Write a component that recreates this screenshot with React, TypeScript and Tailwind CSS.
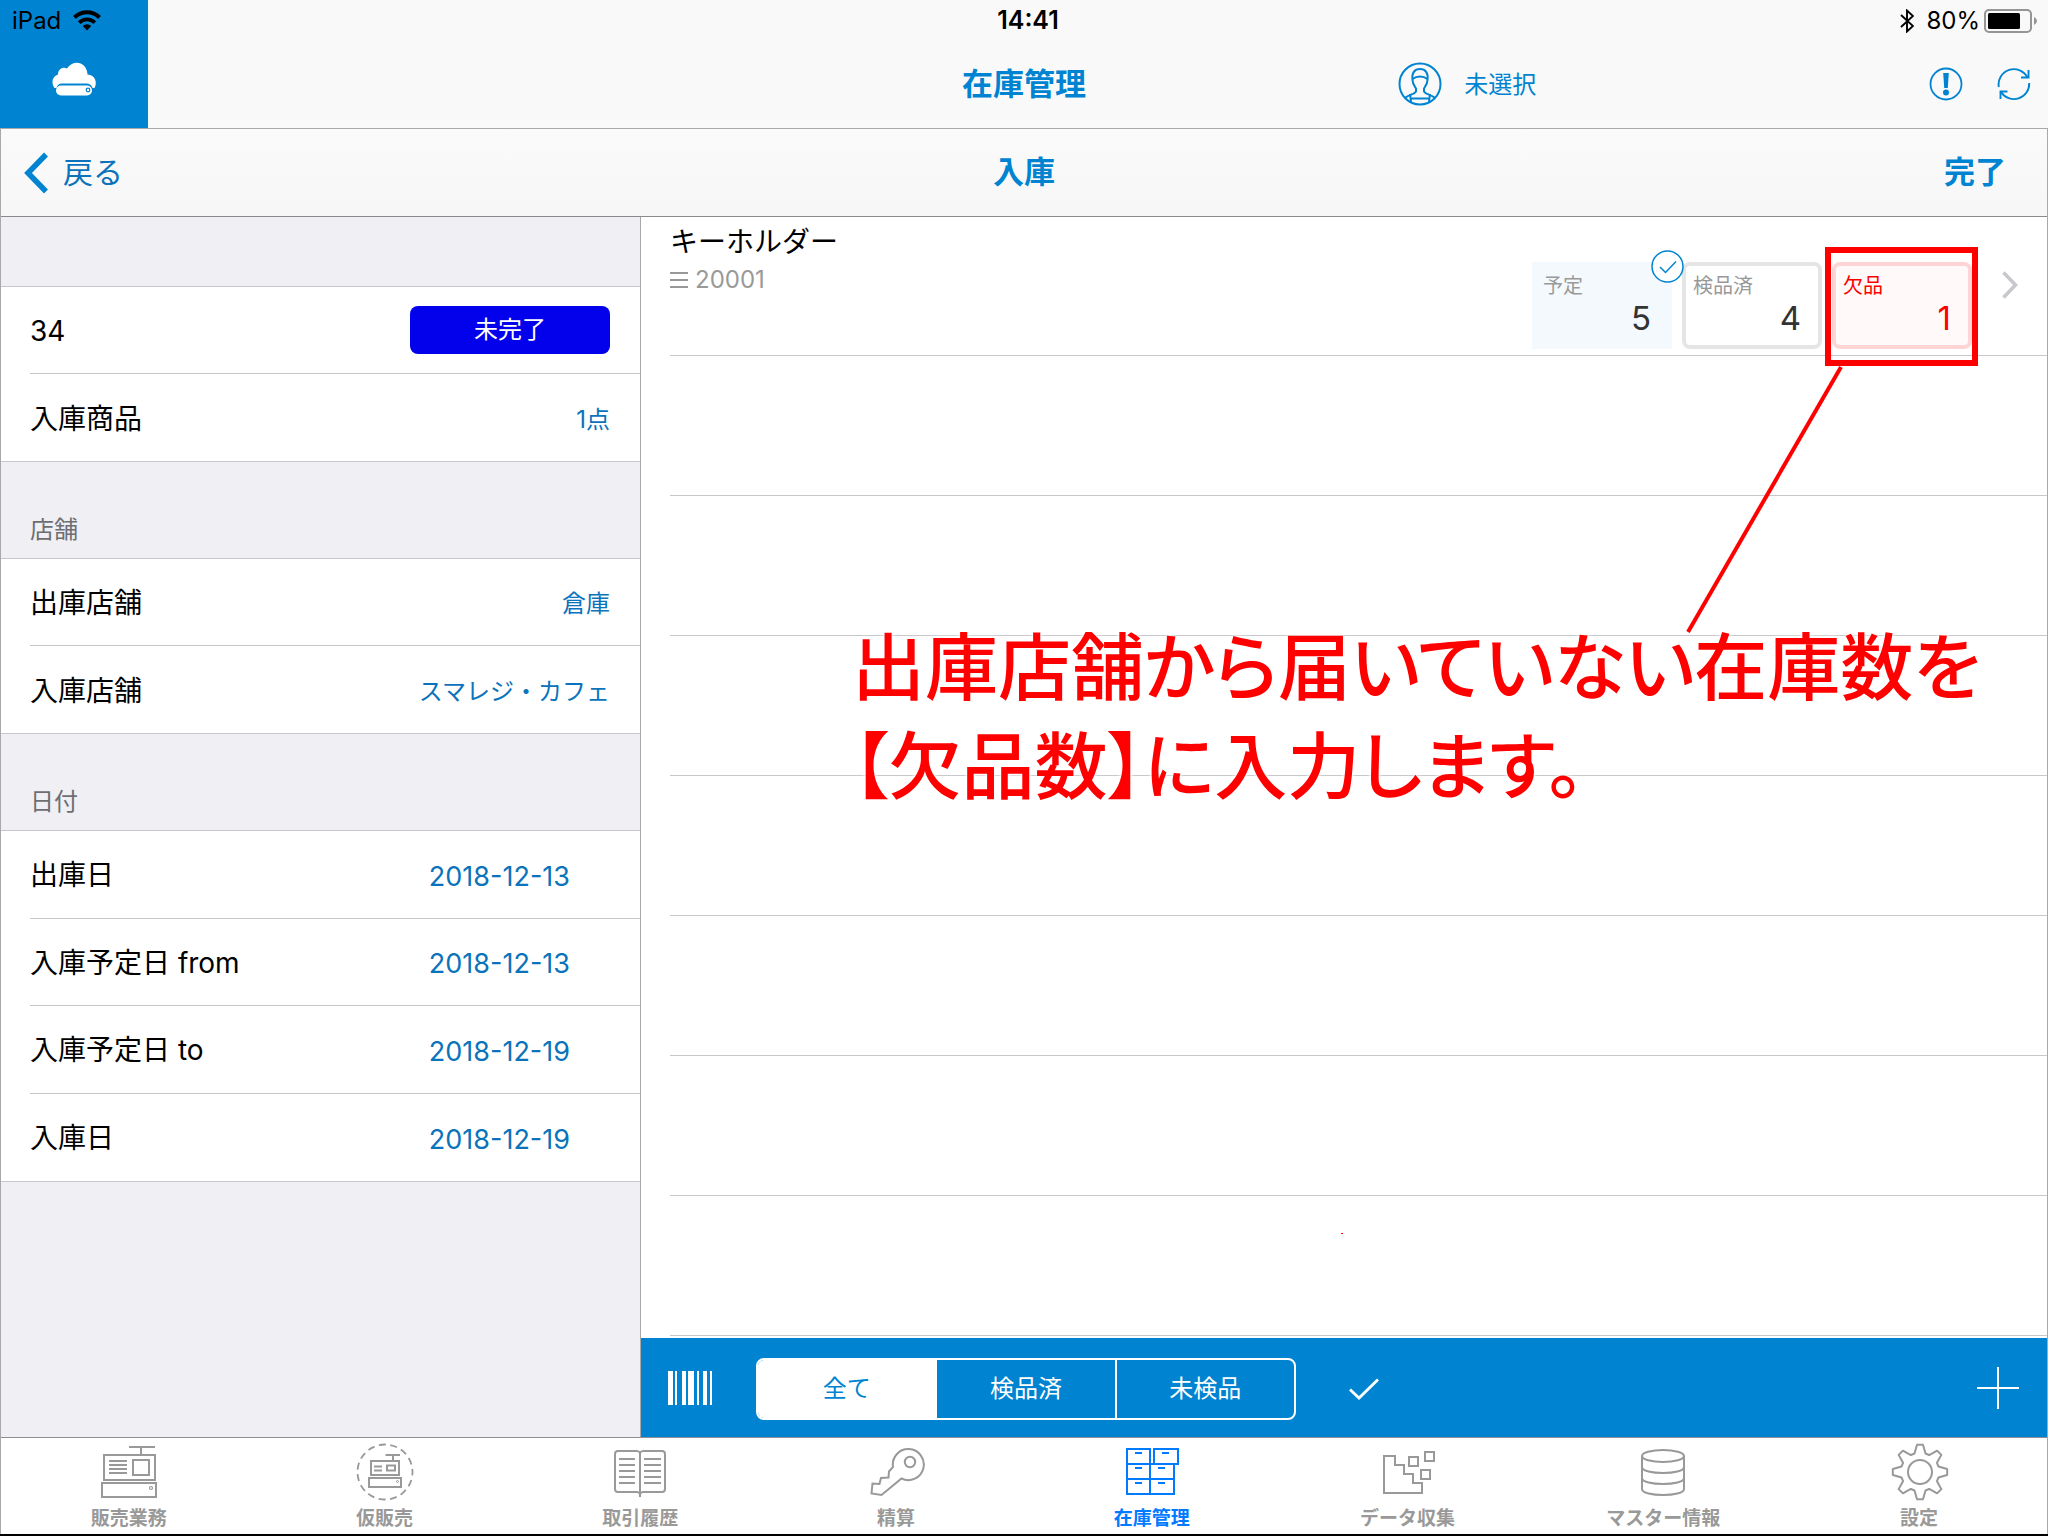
import type { ReactNode } from "react";

const BLUE = "#0084d1";

function WifiIcon() {
  return (
    <svg width="28" height="21" viewBox="0 0 28 21" aria-hidden="true">
      <path d="M1.500 7.500 A17.500 17.500 0 0 1 26.500 7.500" fill="none" stroke="#000" strokeWidth="4" />
      <path d="M6.200 12.600 A11 11 0 0 1 21.800 12.600" fill="none" stroke="#000" strokeWidth="3.800" />
      <path d="M9.800 16 A6 6 0 0 1 18.200 16 L14 20.500 Z" fill="#000" />
    </svg>
  );
}

function CloudLogo() {
  return (
    <svg width="44" height="34" viewBox="0 0 44 34" aria-hidden="true">
      <path
        d="M2.500 26 C-1 21 0 14.500 6 12.500 C6 7 11 4.500 15 6.500 C21 -3 35 -0.500 35.500 12.500 C42 13 46 19 42.500 26 L40.500 26 C39.500 23 37.500 21.500 34.500 21.500 L10 21.500 C7 21.500 5 23.500 4.500 26 Z"
        fill="#fff"
      />
      <rect x="4" y="23.500" width="36" height="10" rx="5" fill="#fff" />
      <circle cx="36" cy="28" r="1.800" fill="none" stroke={BLUE} strokeWidth="1.200" />
    </svg>
  );
}

function BluetoothIcon() {
  return (
    <svg width="14" height="24" viewBox="0 0 14 24" fill="none" stroke="#000" strokeWidth="1.900" aria-hidden="true">
      <path d="M1 6 L13 17 L7 22.500 V1.500 L13 7 L1 18" />
    </svg>
  );
}

function BatteryIcon() {
  return (
    <svg width="54" height="24" viewBox="0 0 54 24" aria-hidden="true">
      <rect x="1" y="1" width="46" height="22" rx="4" fill="none" stroke="#959595" strokeWidth="2" />
      <rect x="4" y="4" width="32" height="16" rx="1.500" fill="#000" />
      <path d="M50 8 Q53 9.500 53 12 Q53 14.500 50 16 Z" fill="#959595" />
    </svg>
  );
}

function PersonIcon() {
  return (
    <svg width="44" height="44" viewBox="0 0 44 44" fill="none" stroke={BLUE} strokeWidth="2" aria-hidden="true">
      <circle cx="22" cy="22" r="20.500" />
      <path d="M14.500 18 C13.500 11 16.500 7 22 7 C27.500 7 30.500 11 29.500 18 C29.500 22 27 25 26 26.500 L26 29.500 C28 33 33 32 37 36 M14.500 18 C14.500 22 17 25 18 26.500 L18 29.500 C16 33 11 32 7 36" />
      <path d="M14.500 17 C19 13.500 25 13.500 29.500 17" />
      <path d="M12 32 L13 40 M32 32 L31 40 M12.500 36.500 H31.500" />
    </svg>
  );
}

function AlertIcon() {
  return (
    <svg width="34" height="34" viewBox="0 0 34 34" aria-hidden="true">
      <circle cx="17" cy="17" r="15.500" fill="none" stroke={BLUE} strokeWidth="1.800" />
      <path d="M14.200 6 H19.800 L18.800 21 H15.200 Z" fill={BLUE} />
      <circle cx="17" cy="25.500" r="3" fill={BLUE} />
    </svg>
  );
}

function RefreshIcon() {
  return (
    <svg width="34" height="34" viewBox="0 0 34 34" fill="none" stroke={BLUE} strokeWidth="1.900" aria-hidden="true">
      <path d="M1.800 20 A15.300 15.300 0 0 1 30.500 10.500" />
      <path d="M24 10.500 H31.500 V3" />
      <path d="M32.200 16 A15.300 15.300 0 0 1 4 25" />
      <path d="M10.500 24.500 H3.500 V32" />
    </svg>
  );
}

function RegisterIcon() {
  return (
    <>
      <path d="M30 6 H56 M42 6 V14" />
      <rect x="5" y="14" width="51" height="25" />
      <path d="M10 20 H28 M10 24 H28 M10 28 H28 M10 32 H28" />
      <rect x="34" y="19" width="16" height="15" />
      <rect x="3" y="42" width="54" height="14" />
      <circle cx="52" cy="47" r="1.500" strokeWidth="1.200" />
    </>
  );
}

function TempSaleIcon() {
  return (
    <>
      <circle cx="30" cy="31" r="27.500" strokeWidth="1.800" strokeDasharray="7 4.520" strokeDashoffset="3.500" />
      <path d="M30.500 14 H45 M38 14 V20" />
      <rect x="16" y="20" width="28" height="14" />
      <path d="M19 25.500 H27 M19 29.500 H27" />
      <rect x="32" y="24.500" width="8" height="5" />
      <rect x="14" y="37" width="32" height="9" />
      <circle cx="42.500" cy="40.500" r="1" strokeWidth="1" />
    </>
  );
}

function BookIcon() {
  return (
    <>
      <path d="M30 12 Q29 10 27 10 H8 Q5 10 5 13 V48 Q5 51 8 51 H27 Q29 51 30 53 Q31 51 33 51 H52 Q55 51 55 48 V13 Q55 10 52 10 H33 Q31 10 30 12 V56" />
      <path d="M9 18 H25 M9 24 H25 M9 30 H25 M9 36 H25 M9 42 H25" />
      <path d="M34 18 H51 M34 24 H51 M34 30 H51 M34 36 H51 M34 42 H51" />
    </>
  );
}

function KeyIcon() {
  return (
    <>
      <path d="M27 26 A15.500 15.500 0 1 1 35.500 37.500 L15.500 54 L5.500 52.500 L6.500 42.500 L13.500 43 L15 37 L22.500 36.500 L23 30.500 Z" />
      <circle cx="44" cy="21" r="5.200" />
    </>
  );
}

function DrawersIcon() {
  return (
    <>
      <rect x="5" y="8" width="23" height="15" />
      <rect x="32" y="8" width="24" height="15" />
      <path d="M5 23 V53 H52 V23 M28 23 V53 M5 38 H52 M28 23 H33" />
      <path d="M13 12 H20 M40 12 H47 M13 27 H20 M36 27 H43 M13 42 H20 M36 42 H43" />
    </>
  );
}

function DataIcon() {
  return (
    <>
      <path d="M6 15 H17 V24 H26 V33 H35 V42 H44 V52 H6 Z" />
      <rect x="31" y="16" width="9" height="9" />
      <rect x="47" y="11" width="9" height="9" />
      <rect x="43" y="29" width="9" height="9" />
    </>
  );
}

function DatabaseIcon() {
  return (
    <>
      <ellipse cx="30" cy="15" rx="21" ry="6" />
      <path d="M9 15 V48 C9 56 51 56 51 48 V15" />
      <path d="M9 26 C9 34 51 34 51 26 M9 37 C9 45 51 45 51 37" />
    </>
  );
}

const GEAR_POINTS = Array.from({ length: 8 }, (_, i) => {
  const a = (i * Math.PI) / 4;
  return [
    [-5.5, -18.5],
    [-3, -27.2],
    [3, -27.2],
    [5.5, -18.5],
  ]
    .map(([x, y]) => `${(31 + x * Math.cos(a) - y * Math.sin(a)).toFixed(2)},${(31 + x * Math.sin(a) + y * Math.cos(a)).toFixed(2)}`)
    .join(" ");
}).join(" ");

function GearIcon() {
  return (
    <>
      <polygon points={GEAR_POINTS} strokeLinejoin="round" />
      <circle cx="31" cy="31" r="12" />
    </>
  );
}

const TABS: { label: string; icon: ReactNode; active?: boolean }[] = [
  { label: "販売業務", icon: <RegisterIcon /> },
  { label: "仮販売", icon: <TempSaleIcon /> },
  { label: "取引履歴", icon: <BookIcon /> },
  { label: "精算", icon: <KeyIcon /> },
  { label: "在庫管理", icon: <DrawersIcon />, active: true },
  { label: "データ収集", icon: <DataIcon /> },
  { label: "マスター情報", icon: <DatabaseIcon /> },
  { label: "設定", icon: <GearIcon /> },
];

function Header() {
  return (
    <header className="border-b border-[#a9a9ab] bg-[#f9f9f9]">
      <div className="grid h-[41px] grid-cols-3">
        <div className="flex w-[148px] items-center gap-3 bg-[#0084d1] pl-3 text-2xl text-black">
          <span>iPad</span>
          <WifiIcon />
        </div>
        <div className="flex items-center justify-center pl-2 text-[25px] font-semibold">14:41</div>
        <div className="flex items-center justify-end pr-[10px] text-2xl">
          <BluetoothIcon />
          <span className="pr-1 pl-3">80%</span>
          <BatteryIcon />
        </div>
      </div>
      <div className="grid h-[87px] grid-cols-3 text-[#0084d1]">
        <a href="#home" aria-label="ホーム" className="flex w-[148px] justify-center bg-[#0084d1] pt-[21px]">
          <CloudLogo />
        </a>
        <h1 className="flex items-center justify-center pb-0.5 text-[31px] leading-none font-bold">在庫管理</h1>
        <div className="flex items-center pr-[17px] pb-0.5 pl-[33px]">
          <button type="button" className="flex items-center gap-[22px] text-2xl">
            <PersonIcon />
            <span className="pt-0.5">未選択</span>
          </button>
          <div className="ml-auto flex items-center gap-[34px]">
            <button type="button" aria-label="お知らせ">
              <AlertIcon />
            </button>
            <button type="button" aria-label="更新">
              <RefreshIcon />
            </button>
          </div>
        </div>
      </div>
    </header>
  );
}

function SubHeader() {
  return (
    <nav className="grid h-[88px] grid-cols-3 border-b border-[#8a8a8c] bg-linear-to-b from-[#fafafa] to-[#f7f7f7] text-[#0084d1]">
      <a href="#back" className="flex items-center gap-[14px] justify-self-start pl-[22px] text-[30px]">
        <svg width="26" height="42" viewBox="0 0 26 42" fill="none" stroke={BLUE} strokeWidth="5.500" aria-hidden="true">
          <path d="M23 2.500 L5 21 L23 39.500" />
        </svg>
        <span className="text-[#0a73bb]">戻る</span>
      </a>
      <h2 className="flex items-center justify-center text-[31px] font-bold">入庫</h2>
      <button type="button" className="justify-self-end pr-[41px] text-[31px] font-bold">
        完了
      </button>
    </nav>
  );
}

function Row({ label, children, inset }: { label: string; children: ReactNode; inset?: boolean }) {
  return (
    <div className="flex-1 bg-white pl-[29px]">
      <div className={inset ? "flex h-full items-center justify-between border-b border-[#c8c7cc] pr-[30px]" : "flex h-full items-center justify-between pr-[30px]"}>
        <dt className="pt-0.5 text-[28px] text-black">{label}</dt>
        <dd className="text-2xl text-[#0a73bb]">{children}</dd>
      </div>
    </div>
  );
}

function Value({ children }: { children: ReactNode }) {
  return <span className="block pt-1">{children}</span>;
}

function DateValue({ children }: { children: ReactNode }) {
  return <span className="block pt-[5px] pr-10 text-[27px]">{children}</span>;
}

function SectionTitle({ children }: { children: ReactNode }) {
  return <h3 className="flex h-[96px] items-end pb-3 pl-[29px] text-2xl text-[#6d6d72]">{children}</h3>;
}

function Sidebar() {
  return (
    <aside className="w-[640px] shrink-0 border-r border-[#a9a9ab] bg-[#efeff4] pt-[69px]">
      <dl className="flex h-[176px] flex-col border-y border-[#c8c7cc]">
        <Row label="34" inset>
          <button type="button" className="h-12 w-[200px] rounded-lg bg-[#0300eb] text-2xl text-white">
            未完了
          </button>
        </Row>
        <Row label="入庫商品">
          <Value>1点</Value>
        </Row>
      </dl>
      <SectionTitle>店舗</SectionTitle>
      <dl className="flex h-[176px] flex-col border-y border-[#c8c7cc]">
        <Row label="出庫店舗" inset>
          <Value>倉庫</Value>
        </Row>
        <Row label="入庫店舗">
          <Value>スマレジ・カフェ</Value>
        </Row>
      </dl>
      <SectionTitle>日付</SectionTitle>
      <dl className="flex h-[352px] flex-col border-y border-[#c8c7cc]">
        <Row label="出庫日" inset>
          <DateValue>2018-12-13</DateValue>
        </Row>
        <Row label="入庫予定日 from" inset>
          <DateValue>2018-12-13</DateValue>
        </Row>
        <Row label="入庫予定日 to" inset>
          <DateValue>2018-12-19</DateValue>
        </Row>
        <Row label="入庫日">
          <DateValue>2018-12-19</DateValue>
        </Row>
      </dl>
    </aside>
  );
}

function ItemRow() {
  return (
    <li className="ml-[29px] flex h-[139px] justify-between border-b border-[#c8c7cc]">
      <div className="pt-[5px]">
        <p className="text-[28px] leading-10 text-black">キーホルダー</p>
        <p className="flex items-center gap-[7px] text-2xl leading-9 text-[#999]">
          <svg width="18" height="18" viewBox="0 0 18 18" stroke="#999" strokeWidth="2" aria-hidden="true">
            <path d="M0 2 H18 M0 9 H18 M0 16 H18" />
          </svg>
          <span>20001</span>
        </p>
      </div>
      <div className="flex items-start gap-[10px] pt-[45px] pr-[28px]">
        <div className="relative h-[87px] w-[140px] bg-[#f4f9fe] px-[11px] pt-1">
          <p className="text-xl leading-10 text-[#999]">予定</p>
          <p className="-mt-[11px] pr-[10px] text-right text-[33px] leading-[46px] text-[#333]">5</p>
          <svg className="absolute -top-3 -right-3 z-10" width="33" height="33" viewBox="0 0 33 33" fill="none" stroke={BLUE} strokeWidth="1.500" aria-hidden="true">
            <circle cx="16.500" cy="16.500" r="15.500" fill="#fff" />
            <path d="M9 17 L14.500 22.500 L25 11.500" />
          </svg>
        </div>
        <label className="block h-[87px] w-[140px] rounded-lg border-4 border-[#e5e5e5] px-[7px] text-xl leading-10 text-[#999]">
          検品済
          <input
            type="text"
            inputMode="numeric"
            defaultValue="4"
            className="-mt-[11px] block h-[46px] w-full bg-transparent pr-[10px] text-right text-[33px] text-[#333] outline-none"
          />
        </label>
        <div className="relative">
          <label className="block h-[87px] w-[140px] rounded-lg border-4 border-[#ffd4d4] bg-[#fff9f9] px-[7px] text-xl leading-10 text-[#f00]">
            欠品
            <input
              type="text"
              inputMode="numeric"
              defaultValue="1"
              className="-mt-[11px] block h-[46px] w-full bg-transparent pr-[10px] text-right text-[33px] text-[#f00] outline-none"
            />
          </label>
          <div className="pointer-events-none absolute -top-[15px] -right-[6px] -bottom-[17px] -left-[7px] border-6 border-[#f00]" />
        </div>
        <svg className="mt-2 ml-[19px]" width="18" height="30" viewBox="0 0 18 30" fill="none" stroke="#c7c7cc" strokeWidth="3.500" aria-hidden="true">
          <path d="M2.500 2.500 L14.500 15 L2.500 27.500" />
        </svg>
      </div>
    </li>
  );
}

const BARCODE: [number, number][] = [
  [0, 5],
  [7, 2],
  [14, 4],
  [20, 6],
  [29, 2],
  [35, 4],
  [42, 2],
];

function Toolbar() {
  return (
    <div className="flex h-[99px] items-center bg-[#0084d1] pr-7 pl-[27px] text-white">
      <button type="button" aria-label="バーコード">
        <svg width="44" height="34" viewBox="0 0 44 34" fill="#fff" aria-hidden="true">
          {BARCODE.map(([x, w]) => (
            <rect key={x} x={x} y="0" width={w} height="34" />
          ))}
        </svg>
      </button>
      <div role="group" aria-label="絞り込み" className="mt-[3px] ml-11 flex h-[62px] w-[540px] divide-x-2 divide-white overflow-hidden rounded-lg border-2 border-white text-2xl">
        <button type="button" aria-pressed="true" className="flex-1 bg-white text-[#0084d1]">
          全て
        </button>
        <button type="button" aria-pressed="false" className="flex-1">
          検品済
        </button>
        <button type="button" aria-pressed="false" className="flex-1">
          未検品
        </button>
      </div>
      <button type="button" aria-label="一括検品" className="mt-[3px] ml-[52px]">
        <svg width="32" height="24" viewBox="0 0 32 24" fill="none" stroke="#fff" strokeWidth="2.800" aria-hidden="true">
          <path d="M2 12.500 L11 21 L30 2.500" />
        </svg>
      </button>
      <button type="button" aria-label="追加" className="ml-auto">
        <svg width="42" height="42" viewBox="0 0 42 42" stroke="#fff" strokeWidth="2" aria-hidden="true">
          <path d="M21 0 V42 M0 21 H42" />
        </svg>
      </button>
    </div>
  );
}

function Annotation() {
  return (
    <div className="pointer-events-none absolute inset-0 text-[#f00]">
      <svg className="absolute top-[147px] right-[201px]" width="162" height="272" viewBox="0 0 162 272" stroke="#f00" strokeWidth="4" aria-hidden="true">
        <path d="M157 3 L4 268" />
      </svg>
      <p className="absolute top-[401px] left-[211px] text-[73px] leading-[99px] font-medium whitespace-nowrap [font-feature-settings:'palt'] [text-shadow:0_0_4px_#fff,0_0_4px_#fff]">
        出庫店舗から届いていない在庫数を
        <br />
        【欠品数】に入力します。
      </p>
      <span className="absolute top-[1016px] right-[704px] h-px w-0.5 bg-[#f00]" />
    </div>
  );
}

function TabBar() {
  return (
    <nav className="grid h-[97px] grid-cols-8 border-t border-[#8e8e93] bg-white">
      {TABS.map((tab) => (
        <a
          key={tab.label}
          href={`#${tab.label}`}
          aria-current={tab.active ? "page" : undefined}
          className={tab.active ? "flex flex-col items-center pt-[3px] text-[#007aff]" : "flex flex-col items-center pt-[3px] text-[#999]"}
        >
          <svg width="60" height="60" viewBox="0 0 60 60" fill="none" stroke="currentColor" strokeWidth="2" aria-hidden="true">
            {tab.icon}
          </svg>
          <span className="pt-[3px] text-[19px] leading-[30px] font-bold">{tab.label}</span>
        </a>
      ))}
    </nav>
  );
}

export default function App() {
  return (
    <div className="flex min-h-screen flex-col border-b-2 border-black bg-white font-['Inter','Noto_Sans_CJK_JP',sans-serif] text-black" lang="ja">
      <Header />
      <div className="flex flex-1 flex-col border-x border-[#a9a9ab]">
        <SubHeader />
        <main className="flex flex-1">
          <Sidebar />
          <section className="relative flex min-w-0 flex-1 flex-col">
            <ul className="flex-1">
              <ItemRow />
              {Array.from({ length: 7 }, (_, i) => (
                <li key={i} className="ml-[29px] h-[140px] border-b border-[#c8c7cc]" />
              ))}
            </ul>
            <Toolbar />
            <Annotation />
          </section>
        </main>
        <TabBar />
      </div>
    </div>
  );
}
